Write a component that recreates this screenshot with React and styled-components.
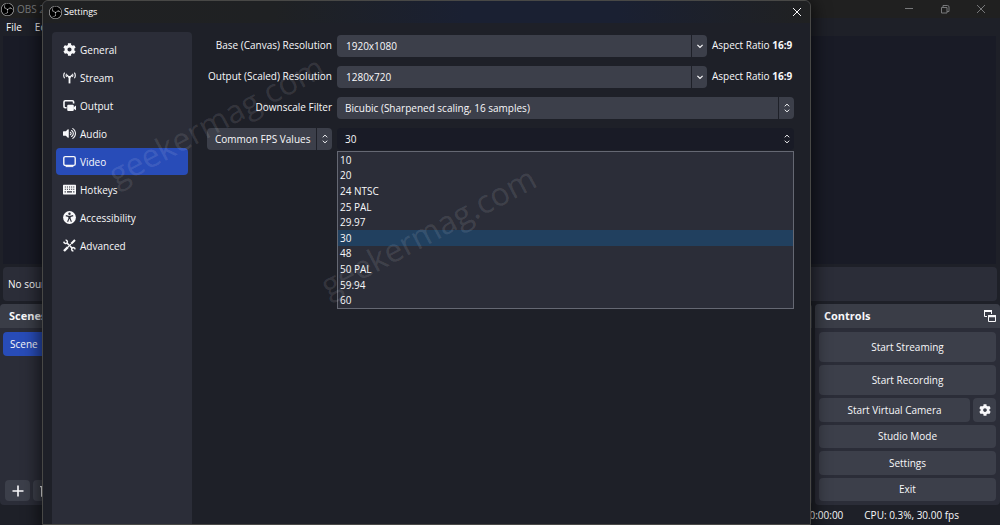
import React from "react";
import styled, { createGlobalStyle, css } from "styled-components";
import { FaCog, FaVolumeUp } from "react-icons/fa";
import { SiObsstudio } from "react-icons/si";

const color = {
  base: "#1e2028",
  preview: "#191b26",
  panel: "#2b2d38",
  control: "#3c3f4a",
  accent: "#284cb8",
  text: "#f8f8fa",
};

const GlobalStyle = createGlobalStyle`
  * { box-sizing: border-box; }
  body { margin: 0; background: ${color.base}; }
  button, input, select { font: inherit; color: inherit; border: 0; margin: 0; padding: 0; }
  svg { display: block; flex: none; }
`;

const Window = styled.div`
  position: relative;
  display: flex;
  flex-direction: column;
  min-height: 100vh;
  overflow: hidden;
  background: ${color.base};
  color: ${color.text};
  font: 10px/14px "Open Sans", "Noto Sans", sans-serif;
`;

const TitleBar = styled.header`
  display: flex;
  align-items: center;
  justify-content: space-between;
  height: 18px;
  padding: 0 14px 0 1px;
  background: #202020;
  color: #77787a;
`;

const AppName = styled.div`
  display: flex;
  align-items: center;
  gap: 3px;
`;

const Logo = styled.span`
  display: flex;
  border-radius: 50%;
  background: #000;
  color: #d4d4d6;
`;

const WindowButtons = styled.div`
  display: flex;
  gap: 26px;
`;

const IconButton = styled.button`
  display: flex;
  align-items: center;
  justify-content: center;
  background: none;
`;

const MenuBar = styled.nav`
  display: flex;
  gap: 13px;
  height: 18px;
  padding: 2px 6px;

  a { color: inherit; text-decoration: none; }
`;

const Preview = styled.main`
  flex: 1;
  min-height: 228px;
  margin: 0 4px 0 3px;
  background: ${color.preview};
`;

const SourceBar = styled.div`
  display: flex;
  align-items: center;
  height: 34px;
  margin: 3px;
  padding: 0 5px;
  border-radius: 4px;
  background: ${color.panel};
`;

const Docks = styled.div`
  display: grid;
  grid-template-columns: minmax(0, 1fr) 185px;
  gap: 3px;
  height: 201px;
`;

const Dock = styled.section`
  display: flex;
  flex-direction: column;
  border-radius: 4px;
  background: ${color.panel};
`;

const DockHeader = styled.header`
  display: flex;
  align-items: center;
  justify-content: space-between;
  height: 24px;
  padding: 0 3px 0 9px;
  border-radius: 4px 4px 0 0;
  background: #3a3d47;

  h2 { margin: 0; font-size: 11px; font-weight: 700; }
`;

const SceneList = styled.ul`
  flex: 1;
  margin: 0;
  padding: 4px 3px;
  list-style: none;
`;

const SceneItem = styled.li`
  height: 24px;
  padding: 0 7px;
  border-radius: 4px;
  background: ${color.accent};
  line-height: 24px;
`;

const DockTools = styled.div`
  display: flex;
  gap: 3px;
  padding: 0 5px 4px;
`;

const ToolButton = styled(IconButton)`
  width: 25px;
  height: 21px;
  border-radius: 4px;
  background: ${color.control};
`;

const ControlStack = styled.div`
  display: flex;
  flex: 1;
  flex-direction: column;
  gap: 3px;
  padding: 4px;
`;

const ControlRow = styled.div`
  display: flex;
  flex: ${(p) => (p.$tall ? "0 0 30px" : "1 1 0")};
  gap: 3px;
`;

const ControlButton = styled.button`
  display: flex;
  flex: ${(p) => (p.$square ? "0 0 23px" : "1")};
  align-items: center;
  justify-content: center;
  border-radius: 4px;
  background: ${color.control};
`;

const StatusBar = styled.footer`
  display: flex;
  align-items: center;
  justify-content: flex-end;
  gap: 21px;
  height: 20px;
  padding-right: 41px;
`;

const Dialog = styled.section`
  position: absolute;
  inset: 0 189px 0 42px;
  display: flex;
  flex-direction: column;
  border: 1px solid #484846;
  border-radius: 6px 6px 0 0;
  background: ${color.base};
  box-shadow: 0 4px 16px 4px rgba(0, 0, 0, 0.55);
`;

const DialogTitle = styled.header`
  display: flex;
  align-items: center;
  justify-content: space-between;
  height: 22px;
  padding: 0 8px 0 6px;
  border-radius: 6px 6px 0 0;
  background: linear-gradient(90deg, #202122, #1f2123 30%, #1a2032 55%, #1a2032 75%, #202122);

  h1 { margin: 0; font-size: 9px; font-weight: 500; color: #fff; }
`;

const DialogName = styled.div`
  display: flex;
  align-items: center;
  gap: 2px;
`;

const DialogBody = styled.div`
  display: grid;
  flex: 1;
  grid-template-columns: 140px minmax(0, 1fr);
  gap: 15px;
  padding: 9px 16px 0 9px;
`;

const Sidebar = styled.nav`
  display: flex;
  flex-direction: column;
  gap: 1px;
  padding: 4px;
  border-radius: 4px 4px 0 0;
  background: ${color.panel};
`;

const NavItem = styled.a`
  display: flex;
  align-items: center;
  gap: 4px;
  height: 27px;
  padding: 0 7px;
  border-radius: 4px;
  color: inherit;
  text-decoration: none;
  ${(p) => p.$active && css`background: ${color.accent};`}
`;

const Form = styled.form`
  display: grid;
  grid-template-columns: 125px minmax(0, 1fr);
  grid-auto-rows: 22px;
  align-content: start;
  gap: 9px 5px;
  padding-top: 3px;
`;

const Label = styled.label`
  line-height: 20px;
  text-align: right;
  white-space: nowrap;
`;

const Field = styled.div`
  position: relative;
  display: flex;
  gap: 5px;
`;

const Combo = styled.div`
  position: relative;
  display: flex;
  flex: 1;
  overflow: hidden;
  border-radius: 4px;
  background: ${(p) => (p.$open ? color.preview : color.control)};
`;

const ComboInput = styled.input`
  flex: 1;
  min-width: 0;
  padding: 0 9px;
  background: none;
`;

const ComboArrow = styled(IconButton)`
  width: 16px;
  border-left: 1px solid ${color.base};
`;

const Select = styled.select`
  flex: 1;
  min-width: 0;
  padding: 0 16px 0 8px;
  appearance: none;
  background: none;
`;

const SelectMark = styled.span`
  position: absolute;
  inset: 0 0 0 auto;
  display: flex;
  align-items: center;
  justify-content: center;
  width: 16px;
  border-left: 1px solid ${(p) => (p.$open ? "transparent" : color.base)};
  pointer-events: none;
`;

const Ratio = styled.span`
  width: 82px;
  line-height: 21px;
  white-space: nowrap;
`;

const Options = styled.ul`
  position: absolute;
  top: 23px;
  left: 0;
  right: 0;
  display: flex;
  flex-direction: column;
  height: 158px;
  margin: 0;
  padding: 0;
  border: 1px solid #656873;
  background: ${color.panel};
  list-style: none;
`;

const Option = styled.li`
  display: flex;
  flex: 1;
  align-items: center;
  padding: 0 2px;
  background: ${(p) => (p.$selected ? "#21405f" : "transparent")};
`;

const Watermark = styled.span`
  position: absolute;
  left: ${(p) => p.$x}px;
  top: ${(p) => p.$y}px;
  color: rgba(255, 255, 255, 0.11);
  font-size: 32px;
  font-weight: 500;
  line-height: 40px;
  transform: rotate(-28deg);
  transform-origin: 0 100%;
  pointer-events: none;
`;

const Stroke = ({ size = 12, width = 1, d, box = 12 }) => (
  <svg width={size} height={size} viewBox={`0 0 ${box} ${box}`} fill="none" stroke="currentColor" strokeWidth={width} aria-hidden="true">
    <path d={d} />
  </svg>
);

const UpDown = () => <Stroke size={10} box={10} d="M2.8 3.3 5 1.1 7.2 3.3M2.8 6.7 5 8.9 7.2 6.7" />;
const Close = () => <Stroke size={10} box={10} d="M1 1 9 9M9 1 1 9" />;

const StreamIcon = () => (
  <svg width="13" height="13" viewBox="0 0 13 13" fill="none" stroke="currentColor" aria-hidden="true">
    <path d="M6.5 5V12.4" strokeWidth="1.8" />
    <path d="M3.9 4 6.5 6.8 9.1 4" strokeWidth="1.3" />
    <path d="M1.6 1.6Q-0.2 4.4 1.6 7.2M11.4 1.6Q13.2 4.4 11.4 7.2" strokeWidth="1.1" />
    <path d="M3.5 2.8Q2.6 4.4 3.5 6M9.5 2.8Q10.4 4.4 9.5 6" strokeWidth="1.1" />
  </svg>
);

const OutputIcon = () => (
  <svg width="13" height="13" viewBox="0 0 13 13" aria-hidden="true">
    <path d="M3.6 8.8H2.2Q1 8.8 1 7.6V3Q1 1.8 2.2 1.8H9.4Q10.6 1.8 10.6 3V4.6" fill="none" stroke="currentColor" strokeWidth="1.6" />
    <rect x="4.2" y="5.8" width="6.6" height="6.2" rx="1.2" fill="currentColor" />
    <path d="M10.6 8.2 13 6.6V11.2L10.6 9.8Z" fill="currentColor" />
  </svg>
);

const VideoIcon = () => (
  <svg width="13" height="13" viewBox="0 0 13 13" fill="none" stroke="currentColor" aria-hidden="true">
    <rect x="0.8" y="1.6" width="11.4" height="8.8" rx="1.4" strokeWidth="1.4" />
    <path d="M2.6 11.6H10.4" strokeWidth="1" />
  </svg>
);

const KeyboardIcon = () => (
  <svg width="13" height="13" viewBox="0 0 13 13" aria-hidden="true">
    <rect x="0" y="1.8" width="13" height="9.6" rx="0.6" fill="currentColor" />
    <path d="M1.8 4H11.4M1.8 6.2H11.4" stroke={color.panel} strokeWidth="1.1" strokeDasharray="1.1 1" />
    <path d="M1.6 8.9H2.8M4 8.9H9M10.2 8.9H11.4" stroke={color.panel} strokeWidth="1.1" />
  </svg>
);

const AccessIcon = () => (
  <svg width="13" height="13" viewBox="0 0 13 13" aria-hidden="true">
    <circle cx="6.5" cy="6.5" r="6.4" fill="currentColor" />
    <circle cx="6.5" cy="2.8" r="1.2" fill={color.panel} />
    <path d="M2.8 4.6 5.4 5.4H7.6L10.2 4.6M5.9 5.4V7.6L4.6 10.8M7.1 5.4V7.6L8.4 10.8M6.5 5.2V8" fill="none" stroke={color.panel} strokeWidth="1.1" />
  </svg>
);

const ToolsIcon = () => (
  <svg width="13" height="13" viewBox="0 0 13 13" fill="none" stroke="currentColor" aria-hidden="true">
    <path d="M4 4 9.4 9.4" strokeWidth="1.6" />
    <path d="M0.9 2.6Q1 4.6 3 4.4Q4.6 4.2 4.4 2.6Q4.2 1 2.6 0.9" strokeWidth="1.5" />
    <path d="M12.1 10.4Q12 8.6 10.2 8.6Q8.6 8.8 8.6 10.4Q8.8 12 10.4 12.1" strokeWidth="1.5" />
    <path d="M12 1 8.2 4.8" strokeWidth="2" />
    <path d="M8.4 4.6 4.6 8.4" strokeWidth="1" />
    <path d="M5 8 1 12" strokeWidth="2.4" />
  </svg>
);

const FloatIcon = () => (
  <svg width="14" height="14" viewBox="0 0 14 14" fill="none" stroke="currentColor" aria-hidden="true">
    <path d="M4 7.5H1.5V1.5H8.5V5" />
    <path d="M1 2H9M5 7.2H13" strokeWidth="2" />
    <path d="M5.5 6.5H12.5V12.5H5.5Z" />
  </svg>
);

const sections = [
  ["General", <FaCog size={13} />],
  ["Stream", <StreamIcon />],
  ["Output", <OutputIcon />],
  ["Audio", <FaVolumeUp size={13} />],
  ["Video", <VideoIcon />],
  ["Hotkeys", <KeyboardIcon />],
  ["Accessibility", <AccessIcon />],
  ["Advanced", <ToolsIcon />],
];

const rates = ["10", "20", "24 NTSC", "25 PAL", "29.97", "30", "48", "50 PAL", "59.94", "60"];

const Resolution = ({ id, label, value }) => (
  <>
    <Label htmlFor={id}>{label}</Label>
    <Field>
      <Combo>
        <ComboInput id={id} defaultValue={value} />
        <ComboArrow type="button" aria-label={`${label} choices`}>
          <Stroke size={8} box={8} width={1.2} d="M1.4 2.8 4 5.4 6.6 2.8" />
        </ComboArrow>
      </Combo>
      <Ratio>Aspect Ratio <b>16:9</b></Ratio>
    </Field>
  </>
);

const Dropdown = ({ open, children, ...rest }) => (
  <Combo $open={open}>
    <Select {...rest}>{children}</Select>
    <SelectMark $open={open}><UpDown /></SelectMark>
  </Combo>
);

export default function App() {
  return (
    <Window>
      <GlobalStyle />
      <TitleBar>
        <AppName><Logo><SiObsstudio size={13} /></Logo>OBS 29</AppName>
        <WindowButtons>
          <IconButton aria-label="Minimize"><Stroke size={10} box={10} d="M1 4.5H9" /></IconButton>
          <IconButton aria-label="Restore"><Stroke size={10} box={10} d="M1.5 3.5H7V9H1.5ZM3 3.5V1.5H7.5Q9 1.5 9 3V7.5H7" /></IconButton>
          <IconButton aria-label="Close"><Close /></IconButton>
        </WindowButtons>
      </TitleBar>
      <MenuBar><a href="#file">File</a><a href="#edit">Edit</a></MenuBar>
      <Preview />
      <SourceBar>No source selected</SourceBar>
      <Docks>
        <Dock>
          <DockHeader><h2>Scenes</h2></DockHeader>
          <SceneList><SceneItem>Scene</SceneItem></SceneList>
          <DockTools>
            <ToolButton aria-label="Add scene"><Stroke width={1.6} d="M6 0.5V11.5M0.5 6H11.5" /></ToolButton>
            <ToolButton aria-label="Remove scene"><Stroke width={1.2} d="M0 1.6H12M4.5 1.6V0.6H7.5V1.6M1.6 1.6V11.2H10.4V1.6" /></ToolButton>
          </DockTools>
        </Dock>
        <Dock>
          <DockHeader>
            <h2>Controls</h2>
            <IconButton aria-label="Float dock"><FloatIcon /></IconButton>
          </DockHeader>
          <ControlStack>
            <ControlRow $tall><ControlButton>Start Streaming</ControlButton></ControlRow>
            <ControlRow $tall><ControlButton>Start Recording</ControlButton></ControlRow>
            <ControlRow>
              <ControlButton>Start Virtual Camera</ControlButton>
              <ControlButton $square aria-label="Virtual camera settings"><FaCog size={12} /></ControlButton>
            </ControlRow>
            <ControlRow><ControlButton>Studio Mode</ControlButton></ControlRow>
            <ControlRow><ControlButton>Settings</ControlButton></ControlRow>
            <ControlRow><ControlButton>Exit</ControlButton></ControlRow>
          </ControlStack>
        </Dock>
      </Docks>
      <StatusBar><span>00:00:00</span><span>CPU: 0.3%, 30.00 fps</span></StatusBar>

      <Dialog role="dialog" aria-labelledby="dialog-title">
        <DialogTitle>
          <DialogName><Logo><SiObsstudio size={13} /></Logo><h1 id="dialog-title">Settings</h1></DialogName>
          <IconButton aria-label="Close settings"><Close /></IconButton>
        </DialogTitle>
        <DialogBody>
          <Sidebar>
            {sections.map(([name, icon]) => (
              <NavItem key={name} href={`#${name.toLowerCase()}`} $active={name === "Video"}>{icon}{name}</NavItem>
            ))}
          </Sidebar>
          <Form>
            <Resolution id="base" label="Base (Canvas) Resolution" value="1920x1080" />
            <Resolution id="output" label="Output (Scaled) Resolution" value="1280x720" />
            <Label htmlFor="filter">Downscale Filter</Label>
            <Field>
              <Dropdown id="filter"><option>Bicubic (Sharpened scaling, 16 samples)</option></Dropdown>
            </Field>
            <Dropdown aria-label="FPS type"><option>Common FPS Values</option></Dropdown>
            <Field>
              <Dropdown open aria-label="Common FPS Values" defaultValue="30">
                {rates.map((r) => <option key={r}>{r}</option>)}
              </Dropdown>
              <Options role="listbox" aria-label="Common FPS Values">
                {rates.map((r) => (
                  <Option key={r} role="option" aria-selected={r === "30"} $selected={r === "30"}>{r}</Option>
                ))}
              </Options>
            </Field>
          </Form>
        </DialogBody>
      </Dialog>
      <Watermark $x={120} $y={154} aria-hidden="true">geekermag.com</Watermark>
      <Watermark $x={332} $y={265} aria-hidden="true">geekermag.com</Watermark>
    </Window>
  );
}
